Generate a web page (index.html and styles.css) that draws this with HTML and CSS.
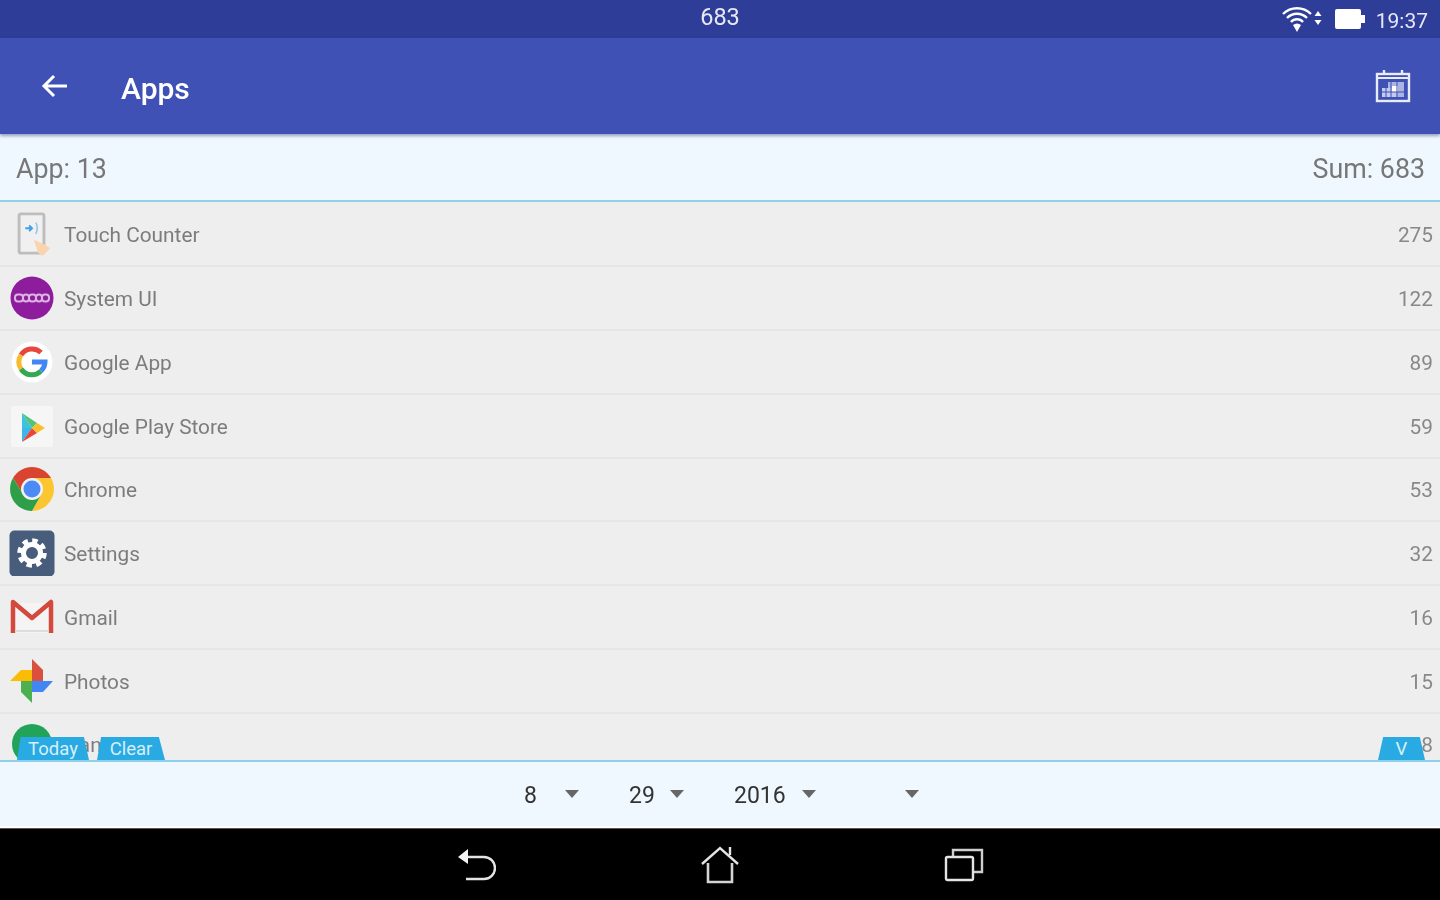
FILE: index.html
```html
<!doctype html>
<html>
  <head>
    <title>Apps</title>
    <link rel="stylesheet" href="styles.css">
  </head>
  <body>
    <div class="screen">
      <div class="status-bar">
        <div class="status-title">683</div>
        <div class="status-right">
          <svg class="ic-wifi" width="42" height="28" viewBox="0 0 42 28">
            <g fill="none" stroke="#fff" stroke-width="2.4">
              <path d="M1 9 A20 20 0 0 1 29 9"/>
              <path d="M5 13 A14 14 0 0 1 25 13"/>
              <path d="M9 17 A8 8 0 0 1 21 17"/>
            </g>
            <path d="M15 27 L11 20 A6 6 0 0 1 19 20 Z" fill="#fff"/>
            <path d="M36 6 L39.5 11 H32.5 Z M36 20 L32.5 15 H39.5 Z" fill="#fff"/>
          </svg>
          <svg width="30" height="20" viewBox="0 0 30 20">
            <rect x="0" y="0" width="26" height="20" rx="2" fill="#fff"/>
            <rect x="26" y="6" width="4" height="8" fill="#fff"/>
          </svg>
          <span class="status-time">19:37</span>
        </div>
      </div>

      <div class="app-bar">
        <svg class="back" width="28" height="26" viewBox="0 0 28 26">
          <path d="M26 13 H3 M13 3 L3 13 L13 23" fill="none" stroke="#fff" stroke-width="3"/>
        </svg>
        <div class="app-title">Apps</div>
        <svg class="calendar" width="36" height="34" viewBox="0 0 36 34">
          <rect x="2" y="5" width="32" height="27" fill="none" stroke="#e8ebf8" stroke-width="2.4"/>
          <path d="M9 1 V6 M27 1 V6" stroke="#e8ebf8" stroke-width="2.4"/>
          <path d="M2 9 H34" stroke="#e8ebf8" stroke-width="2"/>
          <rect x="13" y="13" width="16" height="15" fill="#aab3e2"/>
          <rect x="7" y="19" width="14" height="9" fill="#c4cbeb"/>
          <rect x="17" y="17" width="6" height="6" fill="#fff"/>
          <path d="M7 23 H29 M11 19 V28 M16 13 V28 M22 13 V28" stroke="#3f51b5" stroke-width="1"/>
        </svg>
      </div>

      <div class="summary">
        <span>App: 13</span>
        <span>Sum: 683</span>
      </div>

      <div class="list-wrap">
        <div class="list">
          <div class="row">
            <svg class="icon" viewBox="0 0 44 46">
              <rect x="8.5" y="2" width="26" height="41" rx="2" fill="#f0f0f0" stroke="#bdbdbd" stroke-width="3"/>
              <path d="M15 17 H22 M19 14 L22 17 L19 20" fill="none" stroke="#3f9fe0" stroke-width="2"/>
              <path d="M26 11 Q29 17 26 23" fill="none" stroke="#8cc6ec" stroke-width="1.6"/>
              <path d="M24 29 L35 34 L41 38 L33 46 L28 42 Z" fill="#fbd3ae"/>
            </svg>
            <span class="name">Touch Counter</span>
            <span class="count">275</span>
          </div>
          <div class="row">
            <svg class="icon" viewBox="0 0 44 44">
              <circle cx="22" cy="22" r="21.5" fill="#8e1d9d"/>
              <g fill="none" stroke="#dcb3e2" stroke-width="2">
                <rect x="5" y="18.5" width="8" height="7" rx="3"/>
                <rect x="13" y="18.5" width="6" height="7" rx="3"/>
                <rect x="19" y="18.5" width="7" height="7" rx="3"/>
                <rect x="26" y="18.5" width="6" height="7" rx="3"/>
                <rect x="32" y="18.5" width="7" height="7" rx="3"/>
              </g>
            </svg>
            <span class="name">System UI</span>
            <span class="count">122</span>
          </div>
          <div class="row">
            <svg class="icon" viewBox="0 0 44 44">
              <circle cx="22" cy="22" r="20.5" fill="#fff"/>
              <g fill="none" stroke-width="5">
                <path d="M31 12.5 A13 13 0 0 0 11 15" stroke="#e8453c"/>
                <path d="M11 15 A13 13 0 0 0 11 29" stroke="#f9bb2d"/>
                <path d="M11 29 A13 13 0 0 0 31 31" stroke="#34a853"/>
                <path d="M31 31 A13 13 0 0 0 35 22 H22" stroke="#4285f4"/>
              </g>
            </svg>
            <span class="name">Google App</span>
            <span class="count">89</span>
          </div>
          <div class="row">
            <svg class="icon" viewBox="0 0 44 44">
              <rect x="1" y="2" width="42" height="41" rx="2" fill="#f6f6f6"/>
              <path d="M12 9 V24 H22 Z" fill="#3bc4dc"/>
              <path d="M12 24 V38 L22 24 Z" fill="#3bb6e8"/>
              <path d="M12 9 L22 24 L27 19 Z" fill="#55c27a"/>
              <path d="M12 38 L27 29 L22 24 Z" fill="#e8453c"/>
              <path d="M27 19 L22 24 L27 29 L35 24 Z" fill="#fbc02d"/>
            </svg>
            <span class="name">Google Play Store</span>
            <span class="count">59</span>
          </div>
          <div class="row">
            <svg class="icon" viewBox="0 0 44 44">
              <path d="M3 11 A22 22 0 0 1 41 11 H22 L13 27 Z" fill="#d8442f"/>
              <path d="M41 11 A22 22 0 0 1 22 44 L31 28 L22 11 Z" fill="#fbc62f"/>
              <path d="M22 44 A22 22 0 0 1 3 11 L13 27 L31 28 Z" fill="#2f9e49"/>
              <circle cx="22" cy="22" r="11" fill="#f1f1f1"/>
              <circle cx="22" cy="22" r="8.5" fill="#4c8bf5"/>
            </svg>
            <span class="name">Chrome</span>
            <span class="count">53</span>
          </div>
          <div class="row">
            <svg class="icon icon-tall" viewBox="0 0 46 46">
              <rect x="0.5" y="0.5" width="45" height="46" rx="5" fill="#475d7b"/>
              <circle cx="23" cy="23" r="12" fill="none" stroke="#fff" stroke-width="5.5" stroke-dasharray="5.2 4.2"/>
              <circle cx="23" cy="23" r="8.5" fill="none" stroke="#fff" stroke-width="5"/>
            </svg>
            <span class="name">Settings</span>
            <span class="count">32</span>
          </div>
          <div class="row">
            <svg class="icon" viewBox="0 0 44 44">
              <path d="M3 8 H41 V38 H3 Z" fill="#f4f4f4"/>
              <path d="M3 38 V7 L22 23 L41 7 V38" fill="none" stroke="#d34a3d" stroke-width="4.5" stroke-linejoin="round"/>
              <path d="M5 36 H39" stroke="#dcdcdc" stroke-width="2"/>
            </svg>
            <span class="name">Gmail</span>
            <span class="count">16</span>
          </div>
          <div class="row">
            <svg class="icon" viewBox="0 0 44 44">
              <path d="M22 22 V0 L33 11 V22 Z" fill="#d9503f"/>
              <path d="M22 22 H0 L11 11 H22 Z" fill="#fbbc05"/>
              <path d="M22 22 V44 L11 33 V22 Z" fill="#4caf50"/>
              <path d="M22 22 H43 L33 33 H22 Z" fill="#4285f4"/>
            </svg>
            <span class="name">Photos</span>
            <span class="count">15</span>
          </div>
          <div class="row">
            <svg class="icon" viewBox="0 0 44 44">
              <circle cx="22" cy="22" r="20" fill="#21a35a"/>
            </svg>
            <span class="name">Hangouts</span>
            <span class="count">8</span>
          </div>
        </div>
        <div class="tab tab-today">Today</div>
        <div class="tab tab-clear">Clear</div>
        <div class="tab tab-v">V</div>
      </div>

      <div class="pickers">
        <div class="spinner"><span class="val val-s">8</span><i class="caret"></i></div>
        <div class="spinner"><span class="val val-s">29</span><i class="caret"></i></div>
        <div class="spinner"><span class="val val-l">2016</span><i class="caret"></i></div>
        <div class="spinner"><span class="val val-e"></span><i class="caret"></i></div>
      </div>

      <div class="nav-bar">
        <svg width="40" height="38" viewBox="0 0 40 38">
          <path d="M5 11 H28 A8.5 8.5 0 0 1 28 33 H10" fill="none" stroke="#e4e4e4" stroke-width="2.4"/>
          <path d="M2 11 L12 3 V18 Z" fill="#f4f4f4"/>
        </svg>
        <svg width="40" height="38" viewBox="0 0 40 38">
          <path d="M2 18 L20 2 L38 18" fill="none" stroke="#e4e4e4" stroke-width="2.4"/>
          <path d="M30 9 V1" stroke="#e4e4e4" stroke-width="2.4"/>
          <path d="M8 17 V36 H32 V17" fill="none" stroke="#d4d4d4" stroke-width="2.6"/>
        </svg>
        <svg width="40" height="38" viewBox="0 0 40 38">
          <rect x="2" y="11" width="27" height="23" rx="1.5" fill="none" stroke="#e4e4e4" stroke-width="2.4"/>
          <path d="M9 10 V4 H38 V26 H30" fill="none" stroke="#cfcfcf" stroke-width="2.4"/>
        </svg>
      </div>
    </div>
  </body>
</html>
```

FILE: styles.css
```css
* {
  box-sizing: border-box;
}
body {
  margin: 0;
  font-family: Roboto, "Liberation Sans", sans-serif;
  background: #000;
}
.screen {
  display: flex;
  flex-direction: column;
  width: 1440px;
  height: 900px;
  overflow: hidden;
  filter: blur(0.6px);
}

/* status bar */
.status-bar {
  position: relative;
  display: flex;
  flex: 0 0 38px;
  align-items: center;
  justify-content: flex-end;
  padding-right: 12px;
  background: #2e3d97;
  color: #e6e8f5;
}
.status-title {
  position: absolute;
  left: 0;
  right: 0;
  top: 3px;
  text-align: center;
  font-size: 23.5px;
}
.status-right {
  display: flex;
  align-items: center;
  gap: 11px;
}
.status-time {
  padding-top: 3px;
  font-size: 21px;
}

/* app bar */
.app-bar {
  position: relative;
  z-index: 2;
  display: flex;
  flex: 0 0 96px;
  align-items: center;
  padding: 0 29px 0 41px;
  background: #3f51b5;
  box-shadow: 0 2px 3px rgba(40, 50, 120, 0.45);
}
.app-title {
  flex: 1;
  margin-left: 52px;
  padding-top: 4px;
  color: #fff;
  font-size: 30px;
  font-weight: 500;
}

.summary {
  display: flex;
  flex: 0 0 68px;
  align-items: center;
  justify-content: space-between;
  padding: 3px 15px 0 16px;
  background: #f0f8ff;
  border-bottom: 2px solid #8fd0ea;
  color: #777;
  font-size: 26.8px;
}

/* list */
.list-wrap {
  position: relative;
  flex: 0 0 558px;
  overflow: hidden;
  background: #eee;
}
.list {
  display: grid;
  grid-auto-rows: 63.75px;
  padding-top: 1.5px;
}
.row {
  display: flex;
  align-items: center;
  padding: 0 7px 0 10px;
  border-bottom: 2px solid #e6e6e6;
  color: #7c7c7c;
  font-size: 20.8px;
}
.icon {
  flex: none;
  width: 44px;
  height: 44px;
}
.icon-tall {
  margin: 0 -1px;
  width: 46px;
  height: 46px;
}
.name {
  flex: 1;
  margin-left: 10px;
  padding-top: 2px;
}
.count {
  padding-top: 2px;
  color: #888;
}
.tab {
  position: absolute;
  bottom: 0;
  height: 23px;
  background: #2aaae2;
  color: #d6effa;
  font-size: 18.5px;
  line-height: 25px;
  text-align: center;
}
.tab-today {
  left: 17px;
  width: 72px;
  clip-path: polygon(5% 0, 93% 0, 100% 100%, 0 100%);
}
.tab-clear {
  left: 97px;
  width: 68px;
  clip-path: polygon(6% 0, 91% 0, 100% 100%, 0 100%);
}
.tab-v {
  right: 15px;
  width: 47px;
  clip-path: polygon(11% 0, 89% 0, 100% 100%, 0 100%);
}

/* date pickers */
.pickers {
  display: flex;
  flex: 0 0 68px;
  align-items: center;
  justify-content: center;
  gap: 50px;
  padding: 3px 0 0 3px;
  background: #f0f8ff;
  border-top: 2px solid #8fd0ea;
  border-bottom: 2px solid #fff;
}
.spinner {
  display: flex;
  align-items: center;
}
.val {
  color: #333;
  font-size: 23px;
}
.val-s {
  width: 41px;
}
.val-l {
  width: 68px;
}
.val-e {
  width: 39px;
}
.caret {
  width: 0;
  height: 0;
  margin-top: -3px;
  border-top: 8px solid #666;
  border-left: 7.5px solid transparent;
  border-right: 7.5px solid transparent;
}

/* nav bar */
.nav-bar {
  display: flex;
  flex: 1;
  align-items: center;
  justify-content: center;
  gap: 204px;
  background: #000;
  border-top: 1px solid #555;
}
```
